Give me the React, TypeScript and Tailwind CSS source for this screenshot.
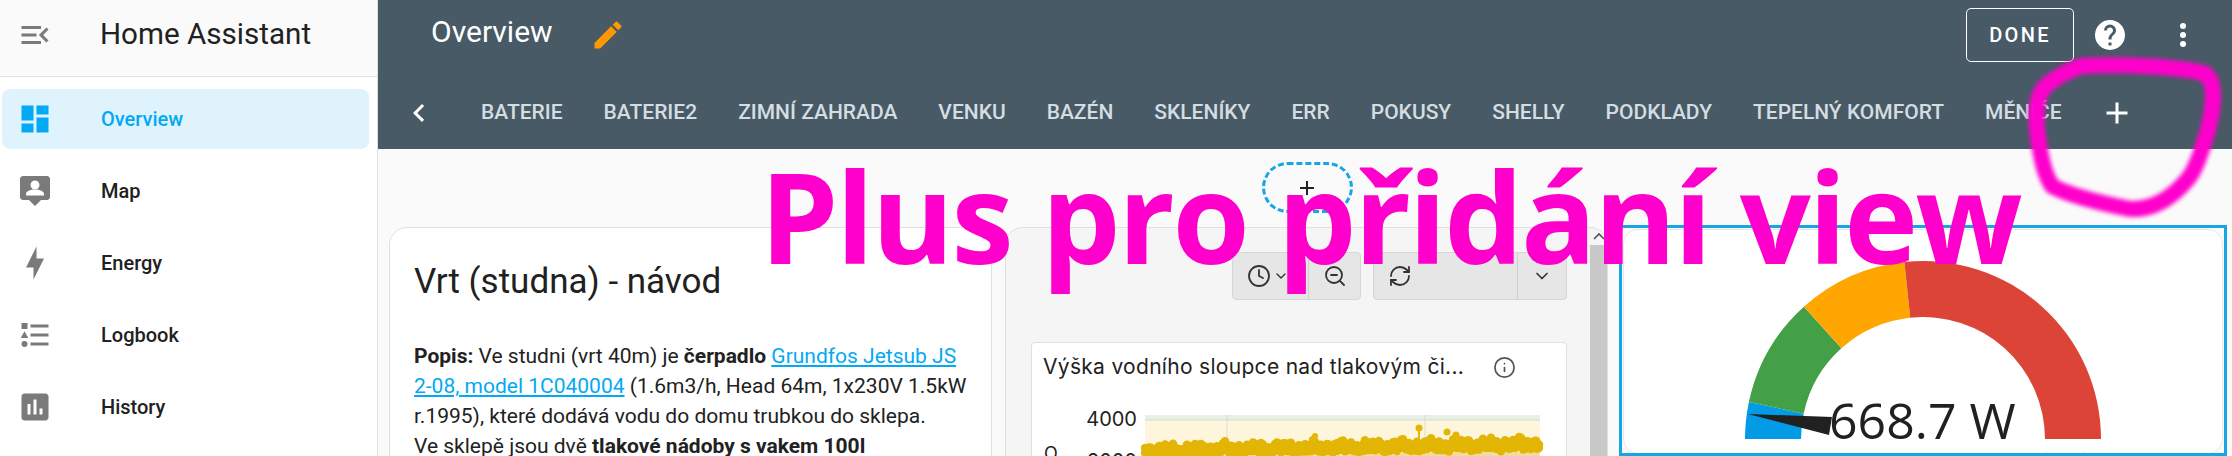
import { Clock, ZoomOut, RefreshCw, ChevronDown, Info } from 'lucide-react';

const mdi = {
  menuOpen: 'M21,15.61L19.59,17L14.58,12L19.59,7L21,8.39L17.44,12L21,15.61M3,6H16V8H3V6M3,13V11H13V13H3M3,18V16H16V18H3Z',
  dashboard: 'M13,3V9H21V3M13,21H21V11H13M3,21H11V15H3M3,13H11V3H3V13Z',
  map: 'M20 2H4C2.9 2 2 2.9 2 4V16C2 17.1 2.9 18 4 18H8L12 22L16 18H20C21.1 18 22 17.1 22 16V4C22 2.9 21.1 2 20 2M12 5C13.66 5 15 6.34 15 8S13.66 11 12 11 9 9.66 9 8 10.34 5 12 5M18 15H6V14C6 12 10 10.9 12 10.9S18 12 18 14V15Z',
  bolt: 'M11 15H6L13 1V9H18L11 23V15Z',
  logbook: 'M5,9.5L7.5,14H2.5L5,9.5M3,4H7V8H3V4M5,20A2,2 0 0,0 7,18A2,2 0 0,0 5,16A2,2 0 0,0 3,18A2,2 0 0,0 5,20M9,5V7H21V5H9M9,19H21V17H9V19M9,13H21V11H9V13Z',
  chart: 'M19 3H5C3.9 3 3 3.9 3 5V19C3 20.1 3.9 21 5 21H19C20.1 21 21 20.1 21 19V5C21 3.9 20.1 3 19 3M9 17H7V10H9V17M13 17H11V7H13V17M17 17H15V13H17V17Z',
  pencil: 'M20.71,7.04C21.1,6.65 21.1,6 20.71,5.63L18.37,3.29C18,2.9 17.35,2.9 16.96,3.29L15.12,5.12L18.87,8.87M3,17.25V21H6.75L17.81,9.93L14.06,6.18L3,17.25Z',
  help: 'M15.07,11.25L14.17,12.17C13.45,12.89 13,13.5 13,15H11V14.5C11,13.39 11.45,12.39 12.17,11.67L13.41,10.41C13.78,10.05 14,9.55 14,9C14,7.89 13.1,7 12,7A2,2 0 0,0 10,9H8A4,4 0 0,1 12,5A4,4 0 0,1 16,9C16,9.88 15.64,10.67 15.07,11.25M13,19H11V17H13M12,2A10,10 0 0,0 2,12A10,10 0 0,0 12,22A10,10 0 0,0 22,12C22,6.47 17.5,2 12,2Z',
  dots: 'M12,16A2,2 0 0,1 14,18A2,2 0 0,1 12,20A2,2 0 0,1 10,18A2,2 0 0,1 12,16M12,10A2,2 0 0,1 14,12A2,2 0 0,1 12,14A2,2 0 0,1 10,12A2,2 0 0,1 12,10M12,4A2,2 0 0,1 14,6A2,2 0 0,1 12,8A2,2 0 0,1 10,6A2,2 0 0,1 12,4Z',
  left: 'M15.41,16.58L10.83,12L15.41,7.41L14,6L8,12L14,18L15.41,16.58Z',
  plus: 'M19,13H13V19H11V13H5V11H11V5H13V11H19V13Z',
};

function Icon({ d, className }: { d: string; className?: string }) {
  return (
    <svg viewBox="0 0 24 24" className={className} fill="currentColor">
      <path d={d} />
    </svg>
  );
}

const navItems = [
  { label: 'Overview', icon: mdi.dashboard, active: true },
  { label: 'Map', icon: mdi.map },
  { label: 'Energy', icon: mdi.bolt },
  { label: 'Logbook', icon: mdi.logbook },
  { label: 'History', icon: mdi.chart },
];

const tabs = ['BATERIE', 'BATERIE2', 'ZIMNÍ ZAHRADA', 'VENKU', 'BAZÉN', 'SKLENÍKY', 'ERR', 'POKUSY', 'SHELLY', 'PODKLADY', 'TEPELNÝ KOMFORT', 'MĚNIČE'];

function Sidebar() {
  return (
    <aside className="w-[378px] shrink-0 flex flex-col bg-white border-r border-[#e0e0e0]">
      <div className="h-[77px] shrink-0 flex items-center bg-[#fafafa] border-b border-[#e0e0e0] pl-[17px] pb-[7px]">
        <Icon d={mdi.menuOpen} className="w-9 h-9 text-[#7a7a7a]" />
        <span className="ml-[47px] text-[29.6px] text-[#212121]">Home Assistant</span>
      </div>
      <nav className="flex flex-col pt-3 pl-[2px] pr-2">
        {navItems.map((item) => (
          <div
            key={item.label}
            className={`h-[60px] mb-3 rounded-lg flex items-center pl-[15px] ${item.active ? 'bg-[#dff3fc] text-[#03a9f4]' : 'text-[#212121]'}`}
          >
            <Icon d={item.icon} className={`w-9 h-9 ${item.active ? 'text-[#03a9f4]' : 'text-[#7a7a7a]'}`} />
            <span className="ml-[48px] text-[20px] font-medium">{item.label}</span>
          </div>
        ))}
      </nav>
    </aside>
  );
}

function Header() {
  return (
    <header className="h-[149px] shrink-0 bg-[#475a65] flex flex-col">
      <div className="h-[70px] flex items-center pl-[53px] pr-[31px]">
        <span className="text-[30px] text-white pb-[7px]">Overview</span>
        <Icon d={mdi.pencil} className="ml-[37px] w-9 h-9 text-[#ff9800]" />
        <button className="ml-auto w-[108px] h-[54px] border border-white rounded-[5px] text-white text-[20px] font-medium tracking-[2.3px]">
          DONE
        </button>
        <Icon d={mdi.help} className="ml-[18px] w-9 h-9 text-white" />
        <Icon d={mdi.dots} className="ml-[37px] w-9 h-9 text-white" />
      </div>
      <div className="flex-1 flex items-center pl-[23px] pt-[6px]">
        <Icon d={mdi.left} className="w-9 h-9 text-white" />
        <div className="ml-[44px] flex gap-[41px] text-[21px] font-medium text-[#d5dde2]">
          {tabs.map((t) => (
            <span key={t} className="whitespace-nowrap">{t}</span>
          ))}
        </div>
        <Icon d={mdi.plus} className="ml-[37px] w-9 h-9 text-white" />
      </div>
    </header>
  );
}

function TextCard() {
  return (
    <section className="w-[603px] h-[260px] shrink-0 bg-white border border-[#e0e0e0] rounded-[18px] pl-[24px] pr-[20px] pt-[32px] text-[#212121]">
      <h2 className="text-[35px] leading-[44px]">Vrt (studna) - návod</h2>
      <p className="mt-[37px] text-[21px] leading-[30px]">
        <b>Popis:</b> Ve studni (vrt 40m) je <b>čerpadlo</b>{' '}
        <a className="text-[#03a9f4] underline">Grundfos Jetsub JS 2-08, model 1C040004</a> (1.6m3/h, Head 64m, 1x230V 1.5kW r.1995), které dodává vodu do domu trubkou do sklepa.
        <br />
        Ve sklepě jsou dvě <b>tlakové nádoby s vakem 100l</b>
      </p>
    </section>
  );
}

// samples for the noisy water level trace
const samples = Array.from({ length: 198 }, (_, i) => {
  const x = i * 2;
  const n = Math.sin(i * 1.7) * 2 + Math.sin(i * 0.43) * 2 + Math.sin(i * 5.3) * 1.5;
  return { x, y: 33 - (i / 198) * 7 + n, low: 41 - (i / 198) * 5 + Math.sin(i * 2.9) * 3 };
});

function WaterChart() {
  return (
    <svg viewBox="0 0 395 41" className="w-[395px] h-[41px] shrink-0 overflow-visible">
      <rect width="395" height="5" fill="#e6f0e6" />
      <rect y="5" width="395" height="36" fill="#fdf6dc" />
      <line x1="0" x2="395" y1="5" y2="5" stroke="#d8dcc8" />
      <line x1="82" x2="82" y1="0" y2="41" stroke="#dcdcd0" />
      <line x1="280" x2="280" y1="0" y2="41" stroke="#dcdcd0" />
      <path d={`M0,41 ${samples.map((s) => `L${s.x},${s.low}`).join(' ')} L395,41Z`} fill="#efdc9a" />
      <line x1="274" x2="274" y1="14" y2="28" stroke="#e3b505" strokeWidth="2" />
      <circle cx="274" cy="13" r="3.5" fill="#e3b505" />
      <circle cx="302" cy="17" r="3.5" fill="#e3b505" />
      <circle cx="311" cy="20" r="3.5" fill="#e3b505" />
      <circle cx="170" cy="21" r="3" fill="#e3b505" />
      {samples.map((s) => (
        <g key={s.x}>
          <circle cx={s.x} cy={s.y} r="4.2" fill="#e3b505" />
          <circle cx={s.x} cy={(s.y + s.low) / 2 + 1} r="4.2" fill="#e3b505" />
        </g>
      ))}
      <circle cx="391" cy="26" r="4.5" fill="#e3b505" />
    </svg>
  );
}

function ChartCard() {
  return (
    <section className="w-[603px] h-[260px] shrink-0 relative bg-[#f5f5f5] border border-[#e0e0e0] rounded-[18px] overflow-hidden pl-[25px] pt-[24px] font-['Inter',sans-serif] text-[#212121]">
      <div className="flex h-[48px] pl-[201px]">
        <div className="w-[129px] flex bg-[#e6e6e6] border border-[#d6d6d6] rounded">
          <div className="w-[76px] flex items-center pl-[14px] gap-[2px] border-r border-[#d0d0d0]">
            <Clock className="w-6 h-6 text-[#333]" strokeWidth={1.8} />
            <ChevronDown className="w-4 h-4 text-[#333]" />
          </div>
          <div className="flex-1 flex items-center justify-center">
            <ZoomOut className="w-6 h-6 text-[#333]" strokeWidth={1.8} />
          </div>
        </div>
        <div className="ml-[12px] w-[194px] flex bg-[#e6e6e6] border border-[#d6d6d6] rounded">
          <div className="w-[144px] flex items-center pl-[14px] border-r border-[#d0d0d0]">
            <RefreshCw className="w-6 h-6 text-[#333]" strokeWidth={1.8} />
          </div>
          <div className="flex-1 flex items-center justify-center">
            <ChevronDown className="w-5 h-5 text-[#333]" />
          </div>
        </div>
      </div>
      <div className="mt-[42px] w-[536px] h-[120px] bg-white border border-[#e0e0e0] rounded">
        <div className="flex items-center h-[48px] pl-[11px]">
          <span className="text-[21px] tracking-[0.3px] whitespace-nowrap">Výška vodního sloupce nad tlakovým či...</span>
          <Info className="ml-[29px] w-[23px] h-[23px] text-[#555]" strokeWidth={1.8} />
        </div>
        <div className="flex mt-[24px]">
          <div className="w-[113px] shrink-0 relative h-[41px] text-[20px]">
            <span className="absolute left-[12px] top-[30px] text-[18px] leading-none">O</span>
            <span className="absolute right-[8px] -top-[8px] leading-[24px]">4000</span>
            <span className="absolute right-[8px] top-[34px] leading-[24px]">2000</span>
          </div>
          <WaterChart />
        </div>
      </div>
      <div className="absolute right-0 top-0 bottom-0 w-[17px] flex flex-col items-center">
        <svg viewBox="0 0 12 8" className="w-3 h-2 mt-[4px] text-[#555]"><path d="M1 7 6 2l5 5" fill="none" stroke="currentColor" strokeWidth="1.6" /></svg>
        <div className="mt-[5px] w-full flex-1 bg-[#c8c8c8]" />
      </div>
    </section>
  );
}

const gaugeSegments = [
  { from: 0, to: 12, color: '#039be5' },
  { from: 12, to: 48, color: '#43a047' },
  { from: 48, to: 84, color: '#ffa600' },
  { from: 84, to: 180, color: '#db4437' },
];

function arc(from: number, to: number) {
  const pt = (r: number, a: number) => {
    const t = (a * Math.PI) / 180;
    return `${178 - r * Math.cos(t)},${179 - r * Math.sin(t)}`;
  };
  return `M${pt(178, from)} A178,178 0 0 1 ${pt(178, to)} L${pt(122, to)} A122,122 0 0 0 ${pt(122, from)}Z`;
}

function GaugeCard() {
  return (
    <section className="w-[608px] h-[231px] shrink-0 -mt-[2px] border-[3px] border-[#17a5e6] overflow-hidden">
      <div className="h-full mt-[1px] mx-[1px] bg-white border border-[#e8e8e8] rounded-[15px] flex flex-col items-center pt-[30px]">
        <div className="relative w-[356px] h-[179px] shrink-0">
          <svg viewBox="0 0 356 179" className="w-[356px] h-[179px]">
            {gaugeSegments.map((s) => (
              <path key={s.color} d={arc(s.from, s.to)} fill={s.color} />
            ))}
            <path d="M3,154 L87,157 L84,175Z" fill="#212121" />
          </svg>
          <span className="absolute left-[84px] top-[130px] text-[50px] leading-[60px] whitespace-nowrap font-['Open_Sans',sans-serif] text-[#212121]">668.7 W</span>
        </div>
        <div className="mt-[11px] text-[20px] leading-[24px] text-[#212121] whitespace-nowrap">Výkon čerpadla z elektrické sítě (VRT)</div>
      </div>
    </section>
  );
}

export default function App() {
  return (
    <div className="relative w-[2232px] h-[456px] overflow-hidden flex bg-[#fafafa] font-['Roboto',sans-serif]">
      <Sidebar />
      <main className="flex-1 flex flex-col min-w-0">
        <Header />
        <div className="flex justify-center pt-[13px] pl-[4px]">
          <div className="w-[91px] h-[51px] rounded-[26px] border-[3px] border-dashed border-[#17a5e6] flex items-center justify-center text-[#212121]">
            <Icon d={mdi.plus} className="w-6 h-6" />
          </div>
        </div>
        <div className="mt-[14px] pl-[11px] flex items-start gap-[13px]">
          <TextCard />
          <div className="mr-[-2px]"><ChartCard /></div>
          <GaugeCard />
        </div>
      </main>

      {/* annotation painted over the screenshot */}
      <div className="absolute left-[760px] top-[141px] text-[125px] leading-[150px] font-bold tracking-[-2.4px] whitespace-nowrap text-[#ff00cc] font-['Open_Sans',sans-serif]">
        Plus pro přidání view
      </div>
      <svg viewBox="0 0 2232 456" className="absolute inset-0 w-[2232px] h-[456px] pointer-events-none">
        <path
          d="M2081,66 C2120,64 2180,66 2206,74 C2216,84 2214,105 2208,130 C2202,150 2196,170 2187,180 C2170,200 2150,210 2130,209 C2105,204 2070,196 2052,186 C2042,170 2040,150 2037,130 C2035,105 2038,92 2048,84 C2058,76 2070,70 2081,66Z"
          fill="none"
          stroke="#ff00cc"
          strokeWidth="16"
          strokeLinejoin="round"
          className="blur-[2px]"
        />
      </svg>
    </div>
  );
}
